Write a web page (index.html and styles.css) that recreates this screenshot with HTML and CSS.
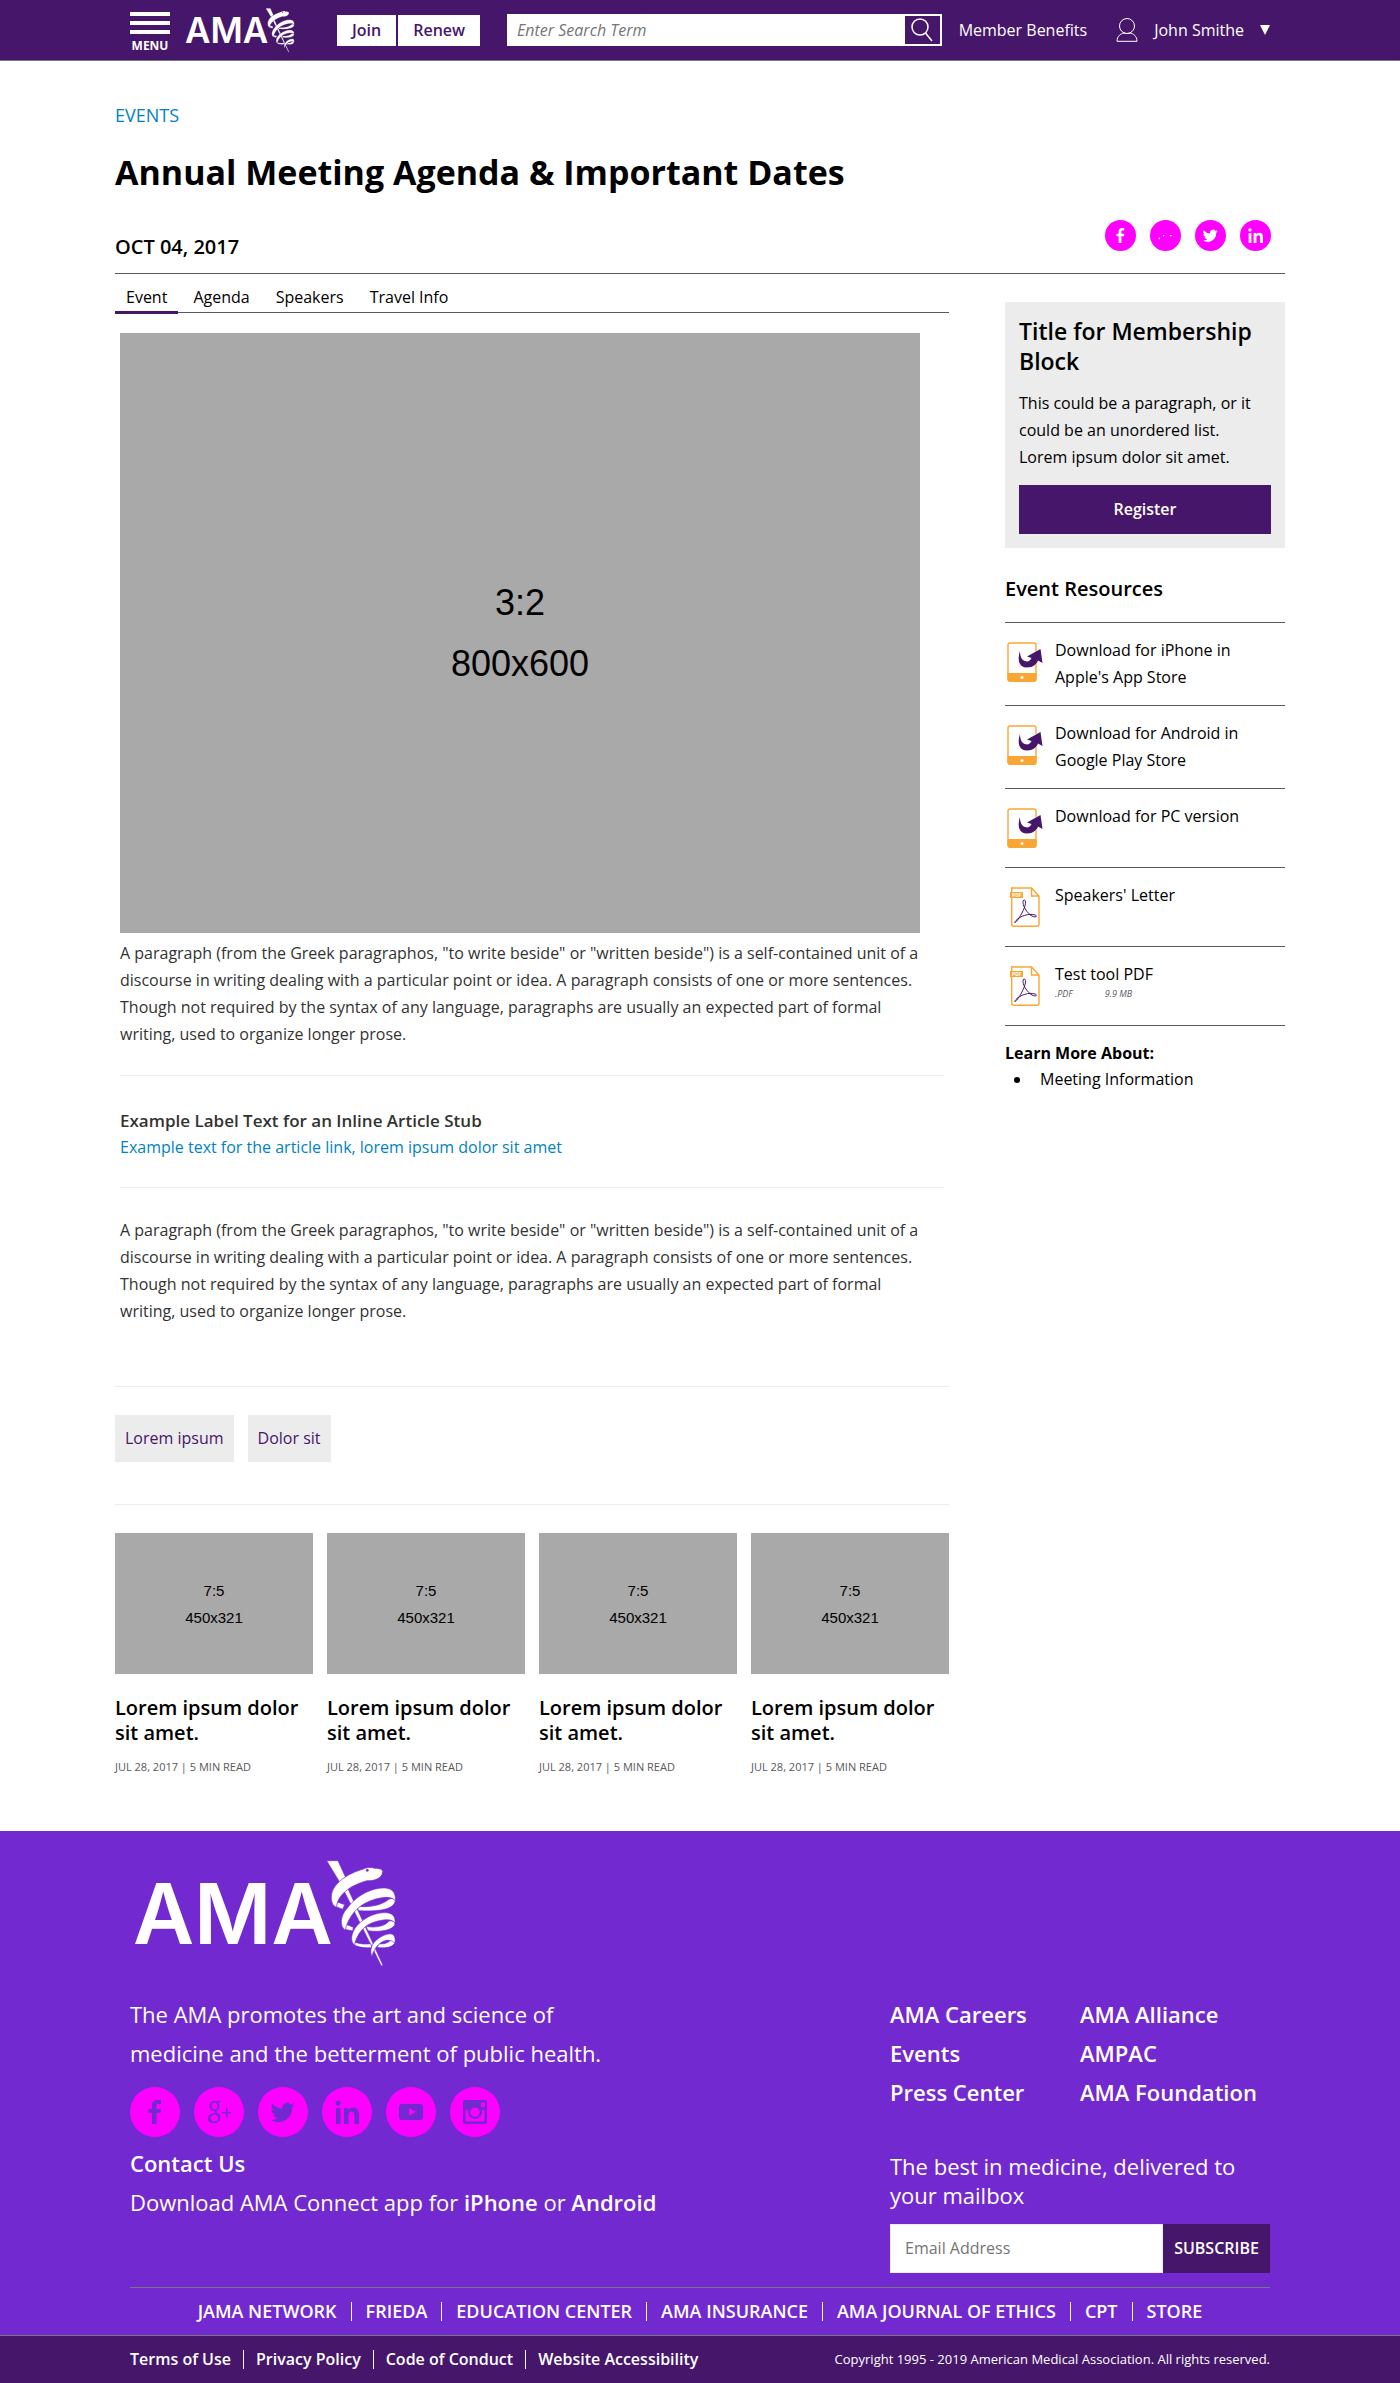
FILE: index.html
```html
<!DOCTYPE html>
<html lang="en">
<head>
<meta charset="utf-8">
<meta name="viewport" content="width=device-width, initial-scale=1">
<title>Annual Meeting Agenda &amp; Important Dates</title>
<link rel="stylesheet" href="styles.css">
</head>
<body>

<svg class="sprite" aria-hidden="true">
  <symbol id="logo" viewBox="0 0 264 108">
    <text class="logo-word" x="0" y="84">AMA</text>
    <g class="logo-mark" transform="translate(189 -4) scale(.3333)">
      <path d="M14 14H48L70 62L54 80Z"/>
      <path d="M54 80L78 98L183 328L178 330Z"/>
      <path d="M46 138L68 146L62 160L42 152Z"/>
      <path d="M70 204L94 214L92 225L68 220Z"/>
      <path d="M98 258C115 265 130 265 146 263L150 275C130 277 110 274 98 268Z"/>
      <path d="M220 135C215 158 180 168 110 164L102 150C140 156 180 148 200 130C212 124 220 130 220 135Z"/>
      <path d="M219 204C215 222 175 230 138 224L132 211C160 217 190 210 200 196C210 192 219 197 219 204Z"/>
      <path d="M218 262C210 275 185 278 165 274L172 263C188 266 202 258 206 252C214 252 218 256 218 262Z"/>
      <path d="M182 46C181 40 172 37 158 37C148 33 135 33 122 40C80 52 32 80 28 120C27 137 32 150 44 154C44 140 50 125 68 108C90 88 115 80 135 74C158 76 182 66 182 46Z"/>
      <path d="M70 222C52 212 54 180 76 156C110 110 160 94 190 96C215 98 222 115 220 135C216 127 205 124 190 124C150 128 110 145 88 180C78 195 72 210 70 222Z"/>
      <path d="M98 268C84 258 86 230 106 208C130 182 165 168 195 170C215 172 221 185 219 202C214 192 200 190 185 192C150 196 125 210 110 235C102 250 98 260 98 268Z"/>
      <path d="M150 302C142 285 148 262 168 248C185 236 205 230 214 236C220 242 221 255 218 262C212 252 195 250 180 258C165 268 155 280 150 302Z"/>
      <circle class="logo-eye" cx="136" cy="43" r="4"/>
    </g>
  </symbol>
  <symbol id="facebook" viewBox="0 0 24 24"><path d="M9 24V13H5.500V9H9V5.500C9 2 11 0 14.500 0H18V4H15.500C14 4 13.500 4.600 13.500 6V9H18L17.500 13H13.500V24Z"/></symbol>
  <symbol id="google" viewBox="0 0 24 24"><path fill-rule="evenodd" d="M8 1C4.500 1 2.500 3.200 2.500 6S4.500 11 7.500 11C7.500 12 8 12.500 8.500 13C4 13.200 1 15 1 18.500S4 23 7 23S13.500 21 13.500 17.500C13.500 13.500 9.500 13.500 9.500 11.500C9.500 10.500 12.500 9.500 12.500 6C12.500 4 11.500 3 11 2.500H13L14 1ZM7.500 2.500C9.500 2.500 10.500 4.500 10.500 6.500C10.500 8 9.500 9.500 8 9.500S4.700 8 4.700 5.500C4.700 4 5.800 2.500 7.500 2.500ZM8 14.500C10 15.500 11.500 16.500 11.500 18.500C11.500 20.500 10 21.500 7.500 21.500S3.500 20 3.500 18.200S5.500 14.500 8 14.500ZM19 8H20.500V12H24V13.500H20.500V17.500H19V13.500H15V12H19Z"/></symbol>
  <symbol id="twitter" viewBox="0 0 24 24"><path d="M23.600 4.900a9.700 9.700 0 0 1-2.800.8 4.900 4.900 0 0 0 2.100-2.700c-1 .6-2 1-3.100 1.200a4.900 4.900 0 0 0-8.400 4.500A14 14 0 0 1 1.200 3.500a4.900 4.900 0 0 0 1.500 6.600 4.900 4.900 0 0 1-2.200-.6v.1a4.900 4.900 0 0 0 4 4.800 5 5 0 0 1-2.300.1 4.900 4.900 0 0 0 4.600 3.400A9.900 9.900 0 0 1-.4 19.900a14 14 0 0 0 21.500-12.400c1-.7 1.800-1.600 2.500-2.600z"/></symbol>
  <symbol id="linkedin" viewBox="0 0 24 24"><path d="M1 8H5.500V24H1ZM3.200 0.500A2.600 2.600 0 1 1 3.200 5.700A2.600 2.600 0 1 1 3.200 .5ZM9 8H13.300V10.200C14 8.900 15.700 7.600 18 7.600C22.500 7.600 24 10.500 24 15V24H19.500V16C19.500 13.500 19 11.600 16.700 11.600C14.300 11.600 13.500 13.300 13.500 16V24H9Z"/></symbol>
  <symbol id="youtube" viewBox="0 0 24 24"><path fill-rule="evenodd" d="M3 4H21C23 4 24 5 24 7V17C24 19 23 20 21 20H3C1 20 0 19 0 17V7C0 5 1 4 3 4ZM10 8V15.500L17 11.700Z"/></symbol>
  <symbol id="instagram" viewBox="0 0 24 24"><path fill-rule="evenodd" d="M2 0H22Q24 0 24 2V22Q24 24 22 24H2Q0 24 0 22V2Q0 0 2 0ZM18 2.500V7H22V2.500ZM2.500 10V20Q2.500 21.500 4 21.500H20Q21.500 21.500 21.500 20V10H19A7.200 7.200 0 1 1 5 10ZM12 7.500A4.700 4.700 0 1 0 12 16.900A4.700 4.700 0 1 0 12 7.500Z"/></symbol>
  <symbol id="device" viewBox="0 0 36 40">
    <rect x="1" y="1" width="28" height="38" rx="2" fill="#fff" stroke="#faa634" stroke-width="1.400"/>
    <path d="M.5 31H29.500V37Q29.500 40 27 40H3Q.5 40 .5 37Z" fill="#faa634"/>
    <circle cx="15" cy="35.500" r="1.500" fill="#fff"/>
    <path d="M13 9C10 18 12 25.500 20 25.500C26 25.500 30 22 31 18.500L35.500 21L33.500 7L20 14.500L24.500 16C23 19 21 20 18 19C14.500 18 13 14 13 9Z" fill="#46166b" stroke="#fff" stroke-width="1" paint-order="stroke"/>
  </symbol>
  <symbol id="pdf" viewBox="0 0 36 40">
    <path d="M5 1H24.500L32 9V37Q32 39.300 30 39.300H7Q4.700 39.300 4.700 37V1ZM24.500 1V9H32" fill="#fff" stroke="#faa634" stroke-width="1.400"/>
    <rect x="3" y="5" width="13" height="6" fill="#faa634"/>
    <text class="pdf-tag" x="5" y="10">PDF</text>
    <path d="M17 13C14 15 18 24 24 28.500C29 31.500 31 29 28 28C22 26 13 29 9 33.500C6 37 9 36 12 31C16 25 20 16 18 13.500Q17.500 12.500 17 13Z" fill="none" stroke="#46166b"/>
  </symbol>
</svg>

<header class="topbar">
  <div class="topbar-inner">
    <button class="menu" type="button"><span class="menu-bars"><i></i><i></i><i></i></span>MENU</button>
    <a class="topbar-logo" href="#" aria-label="AMA home"><svg><use href="#logo"/></svg></a>
    <div class="join">
      <a href="#">Join</a><a href="#">Renew</a>
    </div>
    <form class="search">
      <input type="search" placeholder="Enter Search Term" aria-label="Search">
      <button type="button" aria-label="Submit search">
        <svg viewBox="0 0 22 24"><ellipse cx="9" cy="9" rx="8" ry="8"/><path d="M14.500 15L21 23"/></svg>
      </button>
    </form>
    <a class="benefits" href="#">Member Benefits</a>
    <button class="account" type="button">
      <svg viewBox="0 0 22 24"><ellipse cx="11" cy="8" rx="7.500" ry="7.500"/><path d="M1 23.300C1 18 5 15.500 8 15C10 15.700 12 15.700 14 15C17 15.500 21 18 21 23.300Z"/></svg>
      <span>John Smithe</span><i class="caret"></i>
    </button>
  </div>
</header>

<main class="page">
  <a class="eyebrow" href="#">EVENTS</a>
  <h1>Annual Meeting Agenda &amp; Important Dates</h1>
  <div class="meta">
    <p class="date">OCT 04, 2017</p>
    <div class="share">
      <a href="#" aria-label="Facebook"><svg><use href="#facebook"/></svg></a>
      <a href="#" aria-label="Google Plus"><svg viewBox="0 0 24 24"><path d="M1 15H3V18H1ZM8 11H10V13H8ZM19 11H22V13H19Z"/></svg></a>
      <a href="#" aria-label="Twitter"><svg><use href="#twitter"/></svg></a>
      <a href="#" aria-label="LinkedIn"><svg><use href="#linkedin"/></svg></a>
    </div>
  </div>

  <div class="columns">
    <div class="primary">
      <nav class="tabs">
        <a class="active" href="#">Event</a><a href="#">Agenda</a><a href="#">Speakers</a><a href="#">Travel Info</a>
      </nav>
      <article class="article">
        <div class="hero" role="img" aria-label="Placeholder"><span>3:2</span><span>800x600</span></div>
        <p class="copy">A paragraph (from the Greek paragraphos, "to write beside" or "written beside") is a self-contained unit of a discourse in writing dealing with a particular point or idea. A paragraph consists of one or more sentences. Though not required by the syntax of any language, paragraphs are usually an expected part of formal writing, used to organize longer prose.</p>
        <aside class="stub">
          <h2>Example Label Text for an Inline Article Stub</h2>
          <a href="#">Example text for the article link, lorem ipsum dolor sit amet</a>
        </aside>
        <p class="copy">A paragraph (from the Greek paragraphos, "to write beside" or "written beside") is a self-contained unit of a discourse in writing dealing with a particular point or idea. A paragraph consists of one or more sentences. Though not required by the syntax of any language, paragraphs are usually an expected part of formal writing, used to organize longer prose.</p>
      </article>
      <div class="tags"><a href="#">Lorem ipsum</a><a href="#">Dolor sit</a></div>
      <div class="cards">
        <article class="card"><div class="thumb" role="img" aria-label="Placeholder"><span>7:5</span><span>450x321</span></div><h3><a href="#">Lorem ipsum dolor sit amet.</a></h3><p>JUL 28, 2017 | 5 MIN READ</p></article>
        <article class="card"><div class="thumb" role="img" aria-label="Placeholder"><span>7:5</span><span>450x321</span></div><h3><a href="#">Lorem ipsum dolor sit amet.</a></h3><p>JUL 28, 2017 | 5 MIN READ</p></article>
        <article class="card"><div class="thumb" role="img" aria-label="Placeholder"><span>7:5</span><span>450x321</span></div><h3><a href="#">Lorem ipsum dolor sit amet.</a></h3><p>JUL 28, 2017 | 5 MIN READ</p></article>
        <article class="card"><div class="thumb" role="img" aria-label="Placeholder"><span>7:5</span><span>450x321</span></div><h3><a href="#">Lorem ipsum dolor sit amet.</a></h3><p>JUL 28, 2017 | 5 MIN READ</p></article>
      </div>
    </div>

    <aside class="sidebar">
      <section class="membership">
        <h2>Title for Membership Block</h2>
        <p>This could be a paragraph, or it could be an unordered list. Lorem ipsum dolor sit amet.</p>
        <button type="button">Register</button>
      </section>
      <h2 class="resources-title">Event Resources</h2>
      <ul class="resources">
        <li><svg><use href="#device"/></svg><a href="#">Download for iPhone in Apple's App Store</a></li>
        <li><svg><use href="#device"/></svg><a href="#">Download for Android in Google Play Store</a></li>
        <li><svg><use href="#device"/></svg><a href="#">Download for PC version</a></li>
        <li><svg><use href="#pdf"/></svg><a href="#">Speakers' Letter</a></li>
        <li><svg><use href="#pdf"/></svg><div><a href="#">Test tool PDF</a><p class="file"><span>.PDF</span><span>9.9 MB</span></p></div></li>
      </ul>
      <h3 class="more-title">Learn More About:</h3>
      <ul class="more"><li><a href="#">Meeting Information</a></li></ul>
    </aside>
  </div>
</main>

<footer class="footer">
  <div class="footer-inner">
    <a class="footer-logo" href="#" aria-label="AMA home"><svg><use href="#logo"/></svg></a>
    <div class="footer-columns">
      <div class="about">
        <p class="mission">The AMA promotes the art and science of medicine and the betterment of public health.</p>
        <div class="social">
          <a href="#" aria-label="Facebook"><svg><use href="#facebook"/></svg></a>
          <a href="#" aria-label="Google Plus"><svg><use href="#google"/></svg></a>
          <a href="#" aria-label="Twitter"><svg><use href="#twitter"/></svg></a>
          <a href="#" aria-label="LinkedIn"><svg><use href="#linkedin"/></svg></a>
          <a href="#" aria-label="YouTube"><svg><use href="#youtube"/></svg></a>
          <a href="#" aria-label="Instagram"><svg><use href="#instagram"/></svg></a>
        </div>
        <p><a href="#">Contact Us</a></p>
        <p>Download AMA Connect app for <a href="#">iPhone</a> or <a href="#">Android</a></p>
      </div>
      <div class="connect">
        <nav class="footer-links">
          <a href="#">AMA Careers</a><a href="#">AMA Alliance</a>
          <a href="#">Events</a><a href="#">AMPAC</a>
          <a href="#">Press Center</a><a href="#">AMA Foundation</a>
        </nav>
        <form class="subscribe">
          <label for="email">The best in medicine, delivered to your mailbox</label>
          <div class="subscribe-row">
            <input id="email" type="email" placeholder="Email Address">
            <button type="button">SUBSCRIBE</button>
          </div>
        </form>
      </div>
    </div>
    <nav class="network piped">
      <a href="#">JAMA NETWORK</a><a href="#">FRIEDA</a><a href="#">EDUCATION CENTER</a><a href="#">AMA INSURANCE</a><a href="#">AMA JOURNAL OF ETHICS</a><a href="#">CPT</a><a href="#">STORE</a>
    </nav>
  </div>
  <div class="legal">
    <div class="legal-inner">
      <nav class="piped"><a href="#">Terms of Use</a><a href="#">Privacy Policy</a><a href="#">Code of Conduct</a><a href="#">Website Accessibility</a></nav>
      <small>Copyright 1995 - 2019 American Medical Association. All rights reserved.</small>
    </div>
  </div>
</footer>
</body>
</html>
```
FILE: styles.css
```css
:root {
  --purple: #46166b;
  --violet: #7229d0;
  --blue: #0082bf;
  --rule: #58585b;
  --light: #ececec;
  --grey: #a9a9a9;
  --magenta: #ff00ff;
}

* { box-sizing: border-box; }

body {
  margin: 0;
  background: #fff;
  color: #000;
  font: 16px/27px "Open Sans", "Noto Sans", sans-serif;
}

h1, h2, h3, p, ul { margin: 0; padding: 0; }
a { color: inherit; text-decoration: none; }
button, input { font: inherit; border: 0; border-radius: 0; padding: 0; }
svg { display: block; }
.sprite { display: none; }

.logo-word { font: 600 84px "Inter", sans-serif; fill: #fff; }
.logo-mark { fill: #fff; stroke: var(--backdrop); stroke-width: 2px; }
.logo-eye { fill: var(--backdrop); stroke: none; }
.pdf-tag { font: 700 5px "Open Sans", sans-serif; fill: #fff; }

/* Top bar */
.topbar {
  --backdrop: var(--purple);
  background: var(--purple);
  border-bottom: 1px solid #77787b;
  color: #fff;
}
.topbar-inner {
  display: flex;
  align-items: center;
  max-width: 1172px;
  height: 60px;
  margin: 0 auto;
  padding: 0 16px;
}
.menu {
  width: 40px;
  padding-top: 6px;
  background: none;
  color: #fff;
  font-size: 12px;
  font-weight: 700;
  line-height: 16px;
}
.menu-bars { display: grid; gap: 5px; margin-bottom: 4px; }
.menu-bars i { height: 4px; background: #fff; }
.topbar-logo { margin-left: 15px; }
.topbar-logo svg { width: 110px; height: 45px; }
.join { display: flex; gap: 2px; margin-left: 42px; }
.join a {
  padding: 0 15px;
  background: #fff;
  color: var(--purple);
  font-weight: 600;
  line-height: 31px;
}
.search {
  display: flex;
  flex: 1;
  height: 32px;
  margin-left: 27px;
  padding: 2px;
  background: #fff;
}
.search input {
  flex: 1;
  min-width: 0;
  padding: 0 8px;
  background: #fff;
  font-style: italic;
}
.search input::placeholder, .subscribe input::placeholder { color: #757575; opacity: 1; }
.search button { width: 35px; background: var(--purple); }
.search svg { width: 22px; height: 24px; margin: 0 auto; }
.search svg, .account svg { fill: none; stroke: #fff; stroke-width: 1.500px; }
.benefits { margin-left: 17px; }
.account {
  display: flex;
  align-items: center;
  margin-left: 29px;
  background: none;
  color: #fff;
}
.account svg { width: 22px; height: 24px; stroke-width: 1px; }
.account span { margin: 0 16px; }
.caret {
  border: 5px solid transparent;
  border-top: 10px solid #fff;
  border-bottom: 0;
}

/* Page */
.page { max-width: 1170px; margin: 0 auto; padding: 41px 0 54px; }
.eyebrow { display: block; color: var(--blue); font-size: 18px; }
h1 { margin-top: 22px; font-size: 34px; font-weight: 700; line-height: 42px; }
.meta {
  display: flex;
  justify-content: space-between;
  align-items: flex-start;
  margin-top: 27px;
  padding-bottom: 13px;
  border-bottom: 1px solid var(--rule);
}
.date { padding-top: 13px; font-size: 20px; font-weight: 600; }
.share { display: flex; gap: 14px; padding-right: 14px; }
.share a, .social a {
  display: grid;
  place-items: center;
  border-radius: 50%;
  background: var(--magenta);
}
.share a { width: 31px; height: 31px; }
.share svg { width: 15px; height: 15px; fill: #fff; }

.columns { display: grid; grid-template-columns: minmax(0, 1fr) 280px; gap: 56px; }

.tabs {
  display: flex;
  gap: 4px;
  margin-top: 10px;
  border-bottom: 1px solid var(--rule);
}
.tabs a { margin-bottom: -2px; padding: 0 11px; border-bottom: 3px solid transparent; }
.tabs .active { border-color: var(--purple); }

.article { padding: 20px 5px 61px; border-bottom: 1px solid var(--light); }
.hero, .thumb {
  display: flex;
  flex-direction: column;
  align-items: center;
  justify-content: center;
  background: var(--grey);
  font-family: "Liberation Sans", Arial, sans-serif;
}
.hero {
  max-width: 800px;
  aspect-ratio: 4 / 3;
  margin-bottom: 7px;
  font-size: 36px;
  line-height: 61px;
}
.copy { max-width: 810px; color: #333; }
.stub {
  margin: 27px 0 29px;
  padding: 31px 0 26px;
  border: solid var(--light);
  border-width: 1px 0;
}
.stub h2 { color: #333; font-size: 17px; font-weight: 600; line-height: 27px; }
.stub a { display: block; color: var(--blue); }

.tags {
  display: flex;
  gap: 14px;
  padding: 28px 0 42px;
  border-bottom: 1px solid var(--light);
}
.tags a { padding: 10px; background: var(--light); color: var(--purple); }

.cards {
  display: grid;
  grid-template-columns: repeat(4, 1fr);
  gap: 14px;
  margin-top: 28px;
}
.thumb { aspect-ratio: 198 / 141; font-size: 15px; }
.card h3 { margin-top: 21px; font-size: 20px; font-weight: 600; line-height: 25px; }
.card p { margin-top: 12px; color: var(--rule); font-size: 11px; line-height: 20px; }

/* Sidebar */
.sidebar { padding-top: 28px; }
.membership { padding: 14px; background: var(--light); }
.membership h2 { font-size: 23px; font-weight: 600; line-height: 30px; }
.membership p { margin: 14px 0; }
.membership button {
  width: 100%;
  height: 49px;
  background: var(--purple);
  color: #fff;
  font-weight: 600;
}
.resources-title {
  margin: 27px 0 20px;
  font-size: 20px;
  font-weight: 600;
  line-height: 27px;
}
.resources { list-style: none; border-top: 1px solid var(--rule); }
.resources li {
  display: flex;
  gap: 12px;
  min-height: 79px;
  padding: 14px 0;
  border-bottom: 1px solid var(--rule);
}
.resources svg { flex: none; width: 36px; height: 40px; margin: 5px 0 0 2px; }
.file { display: flex; gap: 32px; color: var(--rule); font-size: 9px; font-style: italic; line-height: 12px; }
.more-title { margin-top: 14px; font-size: 16px; font-weight: 700; }
.more { list-style: none; padding-left: 9px; line-height: 25px; }
.more li { display: flex; align-items: center; gap: 20px; }
.more li::before { content: ""; width: 6px; height: 6px; border-radius: 50%; background: #000; }

/* Footer */
.footer {
  --backdrop: var(--violet);
  background: var(--violet);
  color: #fff;
  font-size: 22px;
  line-height: 39px;
}
.footer-inner, .legal-inner { max-width: 1172px; margin: 0 auto; padding: 0 16px; }
.footer-inner { padding-top: 29px; }
.footer-logo { display: block; width: 264px; margin: 0 0 27px 3px; }
.footer-logo svg { width: 264px; height: 108px; }
.footer-columns {
  display: grid;
  grid-template-columns: minmax(0, 1fr) 380px;
  gap: 40px;
  padding-bottom: 14px;
}
.mission { max-width: 500px; }
.about p a { font-weight: 600; }
.social { display: flex; gap: 14px; margin: 14px 0 7px; }
.social a { width: 50px; height: 50px; }
.social svg { width: 24px; height: 24px; fill: var(--violet); }
.footer-links { display: grid; grid-template-columns: 1fr 1fr; font-weight: 600; }
.subscribe { margin-top: 40px; }
.subscribe label { display: block; line-height: 29px; }
.subscribe-row { display: flex; height: 49px; margin-top: 14px; font-size: 16px; }
.subscribe input { flex: 1; min-width: 0; padding: 0 14px; background: #fff; border: 1px solid var(--light); }
.subscribe button { width: 107px; background: var(--purple); color: #fff; font-weight: 600; }

.piped { display: flex; flex-wrap: wrap; font-weight: 600; }
.piped a { display: flex; align-items: center; }
.piped a + a::before { content: ""; width: 1px; height: 19px; margin: 0 12px; background: #fff; }
.network {
  justify-content: center;
  border-top: 1px solid #77787b;
  font-size: 18px;
  line-height: 47px;
}
.network a + a::before { margin: 0 14px; }
.legal { background: var(--purple); border-top: 1px solid #77787b; font-size: 16px; line-height: 47px; }
.legal-inner { display: flex; flex-wrap: wrap; justify-content: space-between; }
.legal small { font-size: 13px; }
```
